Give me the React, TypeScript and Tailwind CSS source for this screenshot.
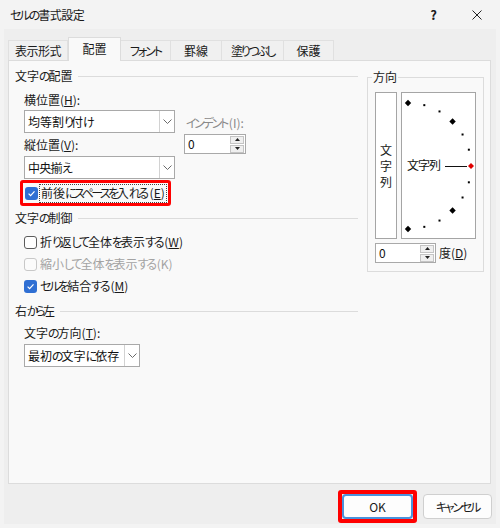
import React from "react";

function Checkbox({ checked, disabled }: { checked?: boolean; disabled?: boolean }) {
  return (
    <span
      className={
        checked
          ? "w-[13px] h-[13px] shrink-0 rounded-[3px] bg-[#2f6fd3] flex items-center justify-center"
          : disabled
          ? "w-[13px] h-[13px] shrink-0 rounded-[3px] border border-[#c8c8c8] bg-[#fbfbfb]"
          : "w-[13px] h-[13px] shrink-0 rounded-[3px] border border-[#5c5c5c] bg-white"
      }
    >
      {checked && (
        <svg width="9" height="9" viewBox="0 0 9 9">
          <path d="M1.6 4.6 L3.6 6.6 L7.5 2.4" stroke="white" strokeWidth="1.2" fill="none" />
        </svg>
      )}
    </span>
  );
}

function Chevron() {
  return (
    <svg width="9" height="5" viewBox="0 0 9 5">
      <path d="M0.5 0.5 L4.5 4.5 L8.5 0.5" stroke="#6a6a6a" strokeWidth="1" fill="none" />
    </svg>
  );
}

function Select({ children, wide }: { children: React.ReactNode; wide?: boolean }) {
  return (
    <div
      className={
        wide
          ? "w-[151px] h-[23px] border border-[#a9a9a9] bg-white flex"
          : "w-[116px] h-[23px] border border-[#a9a9a9] bg-white flex"
      }
    >
      <div className="flex-1 flex items-center pl-[3px] text-[#111] whitespace-nowrap overflow-hidden">{children}</div>
      <div className="w-[15px] border-l border-[#d2d2d2] flex items-center justify-center">
        <Chevron />
      </div>
    </div>
  );
}

function Spinner({ wide }: { wide?: boolean }) {
  return (
    <div
      className={
        wide
          ? "w-[62px] h-[20px] border border-[#a9a9a9] bg-white flex items-center"
          : "w-[61px] h-[20px] border border-[#a9a9a9] bg-white flex items-center"
      }
    >
      <div className="flex-1 pl-[3px] leading-[16px] text-[#111]">0</div>
      <div className="flex flex-col gap-[1px] mr-[1px]">
        <div className="w-[14px] h-[8px] bg-[#efefef] border border-[#c4c4c4] flex items-center justify-center">
          <svg width="5" height="3" viewBox="0 0 5 3">
            <path d="M0 3 L2.5 0 L5 3 Z" fill="#222" />
          </svg>
        </div>
        <div className="w-[14px] h-[8px] bg-[#efefef] border border-[#c4c4c4] flex items-center justify-center">
          <svg width="5" height="3" viewBox="0 0 5 3">
            <path d="M0 0 L2.5 3 L5 0 Z" fill="#222" />
          </svg>
        </div>
      </div>
    </div>
  );
}

function Header({ children }: { children: React.ReactNode }) {
  return (
    <div className="h-[16px] flex items-center gap-[5px]">
      {children}
      <div className="flex-1 h-px bg-[#dcdcdc]" />
    </div>
  );
}

function Dial() {
  const cx = 6;
  const cy = 73;
  const r = 63;
  const angles = [90, 75, 60, 45, 30, 15, -15, -30, -45, -60, -75, -90];
  return (
    <svg width="73" height="145" viewBox="0 0 73 145">
      {angles.map((a) => {
        const x = cx + r * Math.cos((a * Math.PI) / 180);
        const y = cy - r * Math.sin((a * Math.PI) / 180);
        const big = Math.abs(a) === 90 || Math.abs(a) === 45;
        if (big) {
          return (
            <polygon
              key={a}
              points={`${x},${y - 3.2} ${x + 3.2},${y} ${x},${y + 3.2} ${x - 3.2},${y}`}
              fill="#000"
            />
          );
        }
        return <rect key={a} x={x - 1} y={y - 1} width="2" height="2" fill="#000" />;
      })}
      <text
        x="5"
        y="74"
        fontSize="12"
        dominantBaseline="middle"
        fill="#111"
        letterSpacing="-1"
        fontFamily="'Noto Sans CJK JP', sans-serif"
      >
        文字列
      </text>
      <line x1="43" y1="73.5" x2="65" y2="73.5" stroke="#111" strokeWidth="1" />
      <polygon points="69,70 72,73 69,76 66,73" fill="#e00000" />
    </svg>
  );
}

export default function App() {
  const tabs = [
    { t: "表示形式", w: "w-[60px]", tr: "tracking-[-0.5px]" },
    { t: "配置", w: "w-[53px]", tr: "", sel: true },
    { t: "フォント", w: "w-[50px]", tr: "tracking-[-2px]" },
    { t: "罫線", w: "w-[51px]", tr: "" },
    { t: "塗りつぶし", w: "w-[62px]", tr: "tracking-[-2.4px]" },
    { t: "保護", w: "w-[50px]", tr: "" },
  ];
  return (
    <div className="w-[500px] h-[528px] bg-[#f3f3f3] flex flex-col text-[12px] text-[#1a1a1a] font-['Noto_Sans_CJK_JP','Noto_Sans',sans-serif] [font-feature-settings:'palt'] [font-variant-east-asian:proportional-width] overflow-hidden">
      {/* title bar */}
      <div className="h-[29px] flex items-center pl-[10px] pr-[18px]">
        <span className="leading-[16px]">
          <span className="tracking-[-2px]">セルの</span>
          <span className="tracking-[-0.5px]">書式設定</span>
        </span>
        <span className="ml-auto font-bold leading-[16px] text-[13px]">?</span>
        <svg className="ml-[35px]" width="10" height="10" viewBox="0 0 10 10">
          <path d="M0.5 0.5 L9.5 9.5 M9.5 0.5 L0.5 9.5" stroke="#222" strokeWidth="1" />
        </svg>
      </div>

      {/* frame */}
      <div className="ml-[4px] w-[492px] h-[495px] bg-[#eeeeee] flex flex-col">
        {/* tabs */}
        <div className="h-[31px] pl-[4px] flex items-end">
          {tabs.map((tb) =>
            tb.sel ? (
              <div
                key={tb.t}
                className={`${tb.w} h-[24px] -mb-px relative z-10 bg-[#f9f9f9] border border-b-0 border-[#dcdcdc] flex items-center justify-center pb-[1px]`}
              >
                {tb.t}
              </div>
            ) : (
              <div
                key={tb.t}
                className={`${tb.w} ${tb.tr} h-[20px] bg-[#f0f0f0] border border-b-0 border-l-0 border-[#e0e0e0] first:border-l flex items-center justify-center`}
              >
                {tb.t}
              </div>
            )
          )}
        </div>

        {/* panel */}
        <div className="ml-[4px] w-[483px] h-[424px] border border-[#dcdcdc] bg-[#f9f9f9] flex">
          {/* left column */}
          <div className="w-[349px] pl-[6px] pt-[7px] flex flex-col">
            <Header>
              <span className="leading-[16px]">
                文字<span className="tracking-[-2px]">の</span>配置
              </span>
            </Header>
            <div className="pl-[9px] flex">
              <div className="flex flex-col">
                <div className="mt-[8px] h-[16px] leading-[16px]">
                  横位置(<span className="underline">H</span>):
                </div>
                <div className="mt-[2px]">
                  <Select wide>
                    <span>
                      均等割<span className="tracking-[-3px]">り</span>付<span className="tracking-[-2px]">け</span>
                    </span>
                  </Select>
                </div>
                <div className="mt-[4px] h-[16px] leading-[16px]">
                  縦位置(<span className="underline">V</span>):
                </div>
                <div className="mt-[3px]">
                  <Select wide>
                    <span className="tracking-[-0.7px]">中央揃え</span>
                  </Select>
                </div>
              </div>
              <div className="ml-[9px] flex flex-col">
                <div className="mt-[31px] h-[16px] leading-[16px] pl-[2px] text-[#8a8a8a] whitespace-nowrap">
                  <span className="tracking-[-2.3px]">インデント</span>
                  <span className="ml-[2px]">(I):</span>
                </div>
                <div className="mt-[3px]">
                  <Spinner wide />
                </div>
              </div>
            </div>
            {/* highlighted checkbox */}
            <div className="self-start mt-[1px] ml-[5px] h-[26px] border-[3px] border-[#ff0000] rounded-[3px] flex items-center pl-[2px] pr-[1px] gap-[1px]">
              <Checkbox checked />
              <span className="border border-dotted border-[#444] px-[1px] h-[19px] flex items-center leading-[16px] whitespace-nowrap">
                <span>前後</span>
                <span className="tracking-[-2.5px]">にスペースを</span>
                <span>入</span>
                <span className="tracking-[-2.5px]">れる</span>
                <span className="ml-[3px]">
                  (<span className="underline">E</span>)
                </span>
              </span>
            </div>

            <div className="mt-[4px]">
              <Header>
                <span className="leading-[16px]">
                  文字<span className="tracking-[-2px]">の</span>制御
                </span>
              </Header>
            </div>
            <div className="pl-[9px] mt-[5px] flex flex-col">
              <div className="h-[22px] flex items-center gap-[3px]">
                <Checkbox />
                <span className="leading-[16px] whitespace-nowrap">
                  折<span className="tracking-[-2.5px]">り</span>返<span className="tracking-[-2.2px]">して</span>全体
                  <span className="tracking-[-2px]">を</span>表示<span className="tracking-[-2.2px]">する</span>
                  <span className="ml-[2px]">
                    (<span className="underline">W</span>)
                  </span>
                </span>
              </div>
              <div className="h-[22px] flex items-center gap-[3px]">
                <Checkbox disabled />
                <span className="leading-[16px] text-[#a3a3a3] whitespace-nowrap">
                  縮小<span className="tracking-[-2.2px]">して</span>全体<span className="tracking-[-2px]">を</span>表示
                  <span className="tracking-[-2.2px]">する</span>
                  <span className="ml-[2px]">(K)</span>
                </span>
              </div>
              <div className="h-[22px] flex items-center gap-[3px]">
                <Checkbox checked />
                <span className="leading-[16px] whitespace-nowrap">
                  <span className="tracking-[-2.2px]">セルを</span>結合<span className="tracking-[-2.2px]">する</span>
                  <span className="ml-[2px]">
                    (<span className="underline">M</span>)
                  </span>
                </span>
              </div>
            </div>

            <div className="mt-[6px]">
              <Header>
                <span className="leading-[16px]">
                  右<span className="tracking-[-3.5px]">から</span>
                  <span className="ml-[1px]">左</span>
                </span>
              </Header>
            </div>
            <div className="pl-[9px] flex flex-col">
              <div className="mt-[6px] h-[16px] leading-[16px] whitespace-nowrap">
                文字<span className="tracking-[-2px]">の</span>方向(<span className="underline">T</span>):
              </div>
              <div className="mt-[3px]">
                <Select>
                  <span>
                    最初<span className="tracking-[-2px]">の</span>文字<span className="tracking-[-2px]">に</span>依存
                  </span>
                </Select>
              </div>
            </div>
          </div>

          {/* right column */}
          <div className="ml-[9px] mt-[16px] w-[117px] self-start relative border border-[#dcdcdc] pt-[14px] pl-[7px] pb-[8px]">
            <span className="absolute -top-[9px] left-[4px] px-[1px] bg-[#f9f9f9] leading-[16px]">方向</span>
            <div className="flex gap-[4px]">
              <div className="w-[22px] h-[147px] border border-[#a5a5a5] bg-white flex flex-col items-center justify-center leading-[16px]">
                <span>文</span>
                <span>字</span>
                <span>列</span>
              </div>
              <div className="w-[75px] h-[147px] border border-[#a5a5a5] bg-white">
                <Dial />
              </div>
            </div>
            <div className="mt-[4px] flex items-center">
              <Spinner />
              <span className="ml-[3px] leading-[16px]">
                度(<span className="underline">D</span>)
              </span>
            </div>
          </div>
        </div>

        {/* buttons */}
        <div className="mt-[6px] pr-[4px] flex justify-end items-center gap-[6px]">
          <div className="w-[79px] h-[33px] border-[4px] border-[#ff0000] rounded-[3px] flex items-center justify-center">
            <div className="w-[71px] h-[25px] bg-[#fdfdfd] border-2 border-[#4a92dc] rounded-[4px] flex items-center justify-center">
              OK
            </div>
          </div>
          <div className="w-[69px] h-[25px] bg-[#fdfdfd] border border-[#cfcfcf] rounded-[4px] flex items-center justify-center tracking-[-2.2px]">
            キャンセル
          </div>
        </div>
      </div>
    </div>
  );
}
